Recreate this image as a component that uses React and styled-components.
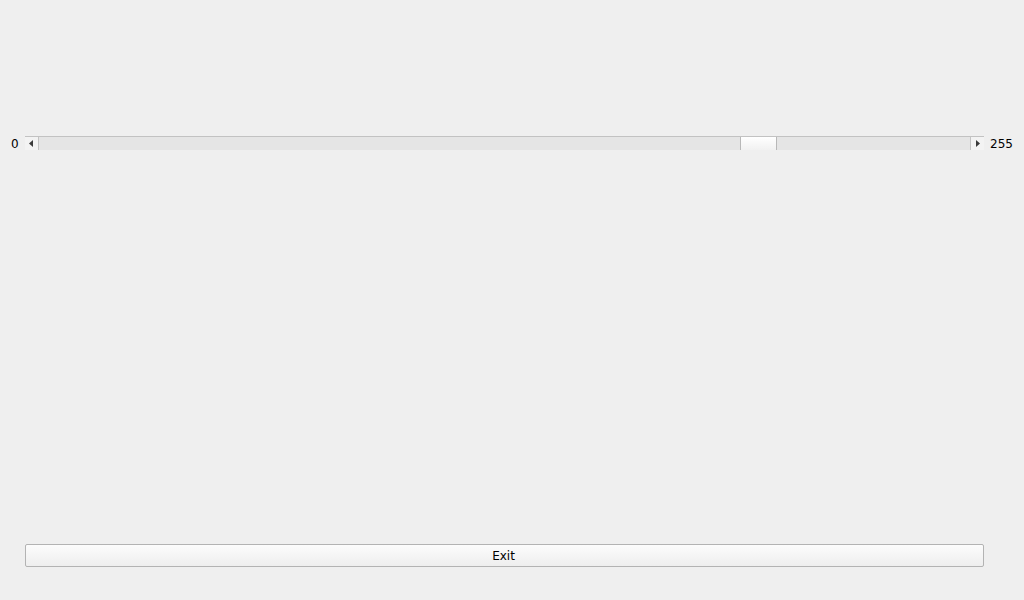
import React from "react";
import styled, { createGlobalStyle } from "styled-components";

const Global = createGlobalStyle`
  html, body { margin: 0; padding: 0; background: #efefef; }
  body { font-family: "DejaVu Sans", "Liberation Sans", sans-serif; font-size: 12px; color: #000; }
`;

const Page = styled.div`
  height: 600px;
  box-sizing: border-box;
  display: flex;
  flex-direction: column;
  justify-content: space-between;
  padding: 136px 11px 33px;
`;

const SliderRow = styled.div`
  display: grid;
  grid-template-columns: 8px 1fr 23px;
  column-gap: 6px;
  align-items: start;
`;

const Label = styled.span`
  line-height: 16px;
  white-space: nowrap;
`;

const Bar = styled.div`
  display: flex;
  height: 14px;
  box-sizing: border-box;
  border-top: 1px solid #c2c2c2;
  background: #e5e5e5;
`;

const ArrowButton = styled.div`
  width: 13px;
  flex: none;
  display: flex;
  align-items: center;
  justify-content: center;
  padding-${(p) => (p.$side === "left" ? "right" : "left")}: 1px;
  box-sizing: border-box;
  width: 14px;
  background: #f3f3f3;
  border-${(p) => (p.$side === "left" ? "right" : "left")}: 1px solid #c4c4c4;
`;

const Track = styled.div`
  flex: 1;
  display: flex;
`;

const Space = styled.div`
  flex: ${(p) => p.$grow} 1 0;
`;

const Handle = styled.div`
  width: 37px;
  flex: none;
  box-sizing: border-box;
  border-left: 1px solid #b8b8b8;
  border-right: 1px solid #b8b8b8;
  background: linear-gradient(#ffffff, #f1f1f1);
`;

const ExitButton = styled.button`
  margin: 0 29px 0 14px;
  height: 23px;
  box-sizing: border-box;
  border: 1px solid #b3b3b3;
  border-radius: 2px;
  background: linear-gradient(#fcfcfc, #eeeeee);
  font-family: "DejaVu Sans", "Liberation Sans", sans-serif;
  font-size: 12px;
  color: #000;
  padding: 0 2px 0 0;
`;

const Arrow = ({ dir }) => (
  <svg width="4" height="7" viewBox="0 0 4 7">
    {dir === "left" ? (
      <path d="M4 0 L0 3.5 L4 7 Z" fill="#3a3a3a" />
    ) : (
      <path d="M0 0 L4 3.5 L0 7 Z" fill="#3a3a3a" />
    )}
  </svg>
);

export default function App() {
  return (
    <>
      <Global />
      <Page>
        <SliderRow>
          <Label>0</Label>
          <Bar>
            <ArrowButton $side="left">
              <Arrow dir="left" />
            </ArrowButton>
            <Track>
              <Space $grow={701} />
              <Handle />
              <Space $grow={193} />
            </Track>
            <ArrowButton $side="right">
              <Arrow dir="right" />
            </ArrowButton>
          </Bar>
          <Label>255</Label>
        </SliderRow>
        <ExitButton>Exit</ExitButton>
      </Page>
    </>
  );
}
